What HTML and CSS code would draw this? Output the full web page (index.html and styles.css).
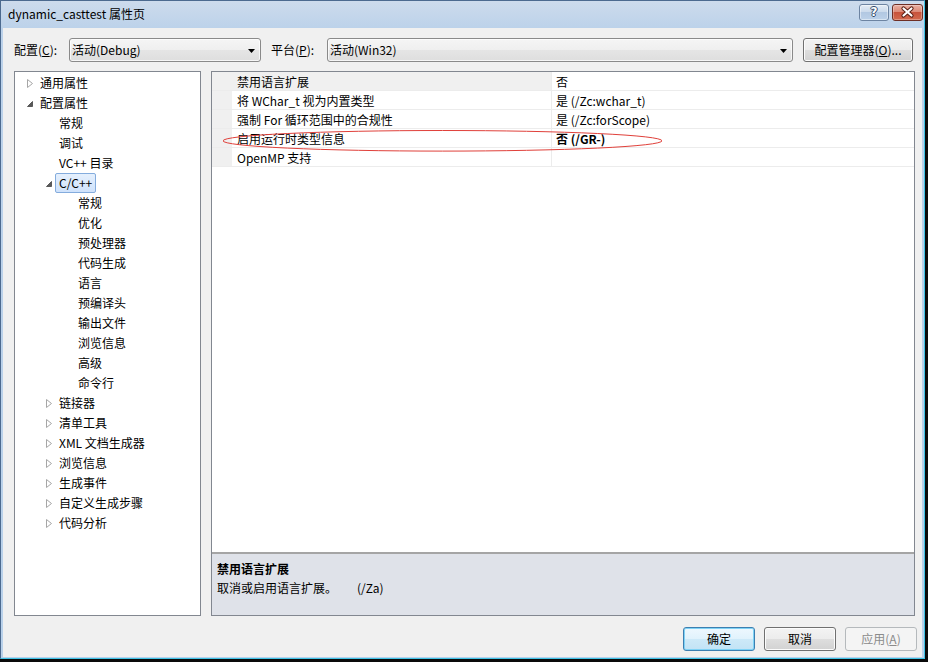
FILE: index.html
```html
<!DOCTYPE html>
<html lang="zh-CN">
<head>
<meta charset="utf-8">
<title>dynamic_casttest 属性页</title>
<link rel="stylesheet" href="styles.css">
</head>
<body>
<div class="window">
  <div class="titlebar">
    <div class="title">dynamic_casttest 属性页</div>
    <div class="caption-btns">
      <div class="cbtn help"><span>?</span></div>
      <div class="cbtn close">
        <svg width="31" height="17" viewBox="0 0 31 17"><path d="M11.5 4.5 L19.5 11.5 M19.5 4.5 L11.5 11.5" stroke="#5b1f14" stroke-width="4.2" stroke-linecap="round"/><path d="M11.5 4.5 L19.5 11.5 M19.5 4.5 L11.5 11.5" stroke="#ffffff" stroke-width="2.2" stroke-linecap="round"/></svg>
      </div>
    </div>
  </div>
  <div class="client">
    <div class="toprow">
      <div class="lbl lbl-config">配置(<u>C</u>):</div>
      <div class="combo combo-config"><span>活动(Debug)</span><svg width="7" height="4" viewBox="0 0 7 4"><polygon points="0,0 7,0 3.5,4" fill="#000"/></svg></div>
      <div class="lbl lbl-platform">平台(<u>P</u>):</div>
      <div class="combo combo-platform"><span>活动(Win32)</span><svg width="7" height="4" viewBox="0 0 7 4"><polygon points="0,0 7,0 3.5,4" fill="#000"/></svg></div>
      <div class="btn btn-mgr">配置管理器(<u>O</u>)...</div>
    </div>
    <div class="main">
      <div class="tree">
        <div class="trow l0"><span class="exp"><svg class="col" width="6" height="9" viewBox="0 0 6 9"><polygon points="0.5,0.5 5.5,4.5 0.5,8.5" fill="#fff" stroke="#a6a6a6"/></svg></span><span class="tl">通用属性</span></div>
        <div class="trow l0"><span class="exp"><svg class="ex" width="6" height="6" viewBox="0 0 6 6"><polygon points="5.5,0.5 5.5,5.5 0.5,5.5" fill="#595959" stroke="#595959" stroke-linejoin="round"/></svg></span><span class="tl">配置属性</span></div>
        <div class="trow l1"><span class="exp"></span><span class="tl">常规</span></div>
        <div class="trow l1"><span class="exp"></span><span class="tl">调试</span></div>
        <div class="trow l1"><span class="exp"></span><span class="tl">VC++ 目录</span></div>
        <div class="trow l1"><span class="exp"><svg class="ex" width="6" height="6" viewBox="0 0 6 6"><polygon points="5.5,0.5 5.5,5.5 0.5,5.5" fill="#595959" stroke="#595959" stroke-linejoin="round"/></svg></span><span class="tl sel">C/C++</span></div>
        <div class="trow l2"><span class="exp"></span><span class="tl">常规</span></div>
        <div class="trow l2"><span class="exp"></span><span class="tl">优化</span></div>
        <div class="trow l2"><span class="exp"></span><span class="tl">预处理器</span></div>
        <div class="trow l2"><span class="exp"></span><span class="tl">代码生成</span></div>
        <div class="trow l2"><span class="exp"></span><span class="tl">语言</span></div>
        <div class="trow l2"><span class="exp"></span><span class="tl">预编译头</span></div>
        <div class="trow l2"><span class="exp"></span><span class="tl">输出文件</span></div>
        <div class="trow l2"><span class="exp"></span><span class="tl">浏览信息</span></div>
        <div class="trow l2"><span class="exp"></span><span class="tl">高级</span></div>
        <div class="trow l2"><span class="exp"></span><span class="tl">命令行</span></div>
        <div class="trow l1"><span class="exp"><svg class="col" width="6" height="9" viewBox="0 0 6 9"><polygon points="0.5,0.5 5.5,4.5 0.5,8.5" fill="#fff" stroke="#a6a6a6"/></svg></span><span class="tl">链接器</span></div>
        <div class="trow l1"><span class="exp"><svg class="col" width="6" height="9" viewBox="0 0 6 9"><polygon points="0.5,0.5 5.5,4.5 0.5,8.5" fill="#fff" stroke="#a6a6a6"/></svg></span><span class="tl">清单工具</span></div>
        <div class="trow l1"><span class="exp"><svg class="col" width="6" height="9" viewBox="0 0 6 9"><polygon points="0.5,0.5 5.5,4.5 0.5,8.5" fill="#fff" stroke="#a6a6a6"/></svg></span><span class="tl">XML 文档生成器</span></div>
        <div class="trow l1"><span class="exp"><svg class="col" width="6" height="9" viewBox="0 0 6 9"><polygon points="0.5,0.5 5.5,4.5 0.5,8.5" fill="#fff" stroke="#a6a6a6"/></svg></span><span class="tl">浏览信息</span></div>
        <div class="trow l1"><span class="exp"><svg class="col" width="6" height="9" viewBox="0 0 6 9"><polygon points="0.5,0.5 5.5,4.5 0.5,8.5" fill="#fff" stroke="#a6a6a6"/></svg></span><span class="tl">生成事件</span></div>
        <div class="trow l1"><span class="exp"><svg class="col" width="6" height="9" viewBox="0 0 6 9"><polygon points="0.5,0.5 5.5,4.5 0.5,8.5" fill="#fff" stroke="#a6a6a6"/></svg></span><span class="tl">自定义生成步骤</span></div>
        <div class="trow l1"><span class="exp"><svg class="col" width="6" height="9" viewBox="0 0 6 9"><polygon points="0.5,0.5 5.5,4.5 0.5,8.5" fill="#fff" stroke="#a6a6a6"/></svg></span><span class="tl">代码分析</span></div>
      </div>
      <div class="props">
        <div class="grid">
          <div class="prow"><div class="pmargin"></div><div class="pname psel">禁用语言扩展</div><div class="pval">否</div></div>
          <div class="prow"><div class="pmargin"></div><div class="pname">将 WChar_t 视为内置类型</div><div class="pval">是 (/Zc:wchar_t)</div></div>
          <div class="prow"><div class="pmargin"></div><div class="pname">强制 For 循环范围中的合规性</div><div class="pval">是 (/Zc:forScope)</div></div>
          <div class="prow"><div class="pmargin"></div><div class="pname">启用运行时类型信息</div><div class="pval bold">否 (/GR-)</div></div>
          <div class="prow"><div class="pmargin"></div><div class="pname">OpenMP 支持</div><div class="pval"></div></div>
        </div>
        <div class="desc">
          <div class="desc-title">禁用语言扩展</div>
          <div class="desc-text">取消或启用语言扩展。<span class="sw">(/Za)</span></div>
        </div>
        <svg class="mark" width="470" height="100" viewBox="0 0 470 100"><ellipse cx="230.5" cy="68.8" rx="219.5" ry="10.3" fill="none" stroke="#e0403a" stroke-width="1"/></svg>
      </div>
    </div>
    <div class="buttons">
      <div class="btn btn-default">确定</div>
      <div class="btn">取消</div>
      <div class="btn btn-disabled">应用(<u>A</u>)</div>
    </div>
  </div>
</div>
</body>
</html>
```

FILE: styles.css
```css
html, body {
  margin: 0;
  padding: 0;
}
body {
  background: #0a0a0a;
  font-family: "Noto Sans CJK SC", "Noto Sans", sans-serif;
  font-size: 12px;
  color: #000;
  width: 928px;
  height: 662px;
  overflow: hidden;
}
.window {
  width: 925px;
  height: 659px;
  box-sizing: border-box;
  border-left: 1px solid #4c6a8f;
  border-top: 1px solid #4c6a8f;
  border-right: 1px solid #3fc3e6;
  border-bottom: 1px solid #3fc3e6;
  background: linear-gradient(#cddbec, #bcd2ea 27px, #b9d1ea);
  display: flex;
  flex-direction: column;
}
.titlebar {
  height: 27px;
  flex: none;
  display: flex;
  justify-content: space-between;
  align-items: flex-start;
  padding-right: 1px;
}
.title {
  padding-left: 7px;
  margin-top: 5px;
  line-height: 16px;
  color: #000;
}
.caption-btns {
  display: flex;
  gap: 3px;
  margin-top: 3px;
}
.cbtn {
  height: 17px;
  box-sizing: border-box;
  border-radius: 3px;
  display: flex;
  align-items: center;
  justify-content: center;
}
.help {
  width: 30px;
  border: 1px solid #6d84a2;
  background: linear-gradient(#e4ecf6, #cbdaec 45%, #b2c8e2 50%, #bcd1e9);
  box-shadow: inset 0 0 0 1px rgba(255,255,255,0.45);
}
.help span {
  font-family: "DejaVu Sans", sans-serif;
  font-weight: bold;
  font-size: 12px;
  line-height: 15px;
  color: #fff;
  text-shadow: 1px 0 0 #33496a, -1px 0 0 #33496a, 0 1px 0 #33496a, 0 -1px 0 #33496a;
}
.close {
  width: 31px;
  border: 1px solid #6e2f25;
  background: linear-gradient(#eab0a3, #dc8a77 45%, #c7533c 50%, #d36a4e);
  box-shadow: inset 0 0 0 1px rgba(255,255,255,0.3);
}
.close svg {
  display: block;
  margin: -1px;
}
.client {
  flex: 1;
  margin: 0 2px 1px 2px;
  background: #f0f0f0;
  padding: 10px 5px 6px 11px;
  display: flex;
  flex-direction: column;
  box-sizing: border-box;
}
.toprow {
  display: flex;
  align-items: center;
  height: 24px;
  padding-right: 4px;
  flex: none;
}
.lbl {
  line-height: 24px;
  white-space: nowrap;
}
.lbl-config { width: 55px; }
.lbl-platform { width: 56px; margin-left: 10px; }
.combo {
  height: 24px;
  box-sizing: border-box;
  border: 1px solid #8a8a8a;
  border-radius: 3px;
  background: linear-gradient(#f5f5f5, #efefef 50%, #e5e5e5 50%, #dedede);
  box-shadow: inset 0 0 0 1px rgba(255,255,255,0.7);
  display: flex;
  align-items: center;
  justify-content: space-between;
  padding: 0 5px 0 2px;
}
.combo span { line-height: 22px; }
.combo svg { margin-top: 1px; }
.combo-config { width: 192px; }
.combo-platform { flex: 1; }
.btn {
  height: 24px;
  width: 72px;
  box-sizing: border-box;
  border: 1px solid #707070;
  border-radius: 3px;
  background: linear-gradient(#f3f3f3, #ececec 50%, #dedede 50%, #d2d2d2);
  box-shadow: inset 0 0 0 1px #fcfcfc;
  display: flex;
  align-items: center;
  justify-content: center;
  line-height: 22px;
}
.btn-mgr { width: 110px; margin-left: 10px; }
.main {
  height: 545px;
  margin-top: 9px;
  display: flex;
  gap: 10px;
  padding-right: 2px;
  flex: none;
}
.tree {
  width: 187px;
  box-sizing: border-box;
  border: 1px solid #828790;
  background: #fff;
  padding-top: 1px;
}
.trow {
  height: 20px;
  display: flex;
  align-items: center;
  white-space: nowrap;
}
.trow.l0 { padding-left: 12px; }
.trow.l1 { padding-left: 31px; }
.trow.l2 { padding-left: 50px; }
.exp {
  width: 9px;
  flex: none;
  display: flex;
  align-items: center;
}
.exp svg { display: block; }
.exp svg.ex { margin-top: 2px; }
.tl {
  line-height: 18px;
  padding: 0 3px;
  border: 1px solid transparent;
  border-radius: 2px;
}
.tl.sel {
  border-color: #84acdd;
  background: linear-gradient(#e5f0fd, #cfe2fb);
}
.props {
  flex: 1;
  box-sizing: border-box;
  border: 1px solid #828790;
  background: #fff;
  position: relative;
  display: flex;
  flex-direction: column;
}
.grid {
  flex: 1;
}
.prow {
  display: flex;
  height: 19px;
  box-sizing: border-box;
  border-bottom: 1px solid #ececec;
  white-space: nowrap;
}
.pmargin {
  width: 20px;
  background: #f0f0f0;
}
.pname {
  width: 320px;
  box-sizing: border-box;
  padding-left: 5px;
  padding-top: 2px;
  line-height: 16px;
  border-right: 1px solid #ececec;
}
.pname.psel { background: #f0f0f0; }
.pval {
  flex: 1;
  padding-left: 4px;
  padding-top: 2px;
  line-height: 16px;
}
.bold { font-weight: bold; }
.desc {
  height: 63px;
  box-sizing: border-box;
  border-top: 2px solid #a5a5a5;
  background: #dfe2e9;
  padding: 5px 5px 0 5px;
  line-height: 19px;
}
.desc-title { font-weight: bold; }
.sw { margin-left: 20px; }
.mark {
  position: absolute;
  left: 0;
  top: 0;
  pointer-events: none;
}
.buttons {
  display: flex;
  justify-content: flex-end;
  gap: 9px;
  margin-top: 11px;
  height: 24px;
  flex: none;
}
.btn-default {
  border-color: #3c7fb1;
  background: linear-gradient(#eef8fe, #e0f2fc 50%, #cde9f8 50%, #c2e3f5);
  box-shadow: inset 0 0 0 1px #7fd2f5;
}
.btn-disabled {
  border-color: #b5b9bc;
  background: #f4f4f4;
  box-shadow: none;
  color: #8b8b8b;
}
```
